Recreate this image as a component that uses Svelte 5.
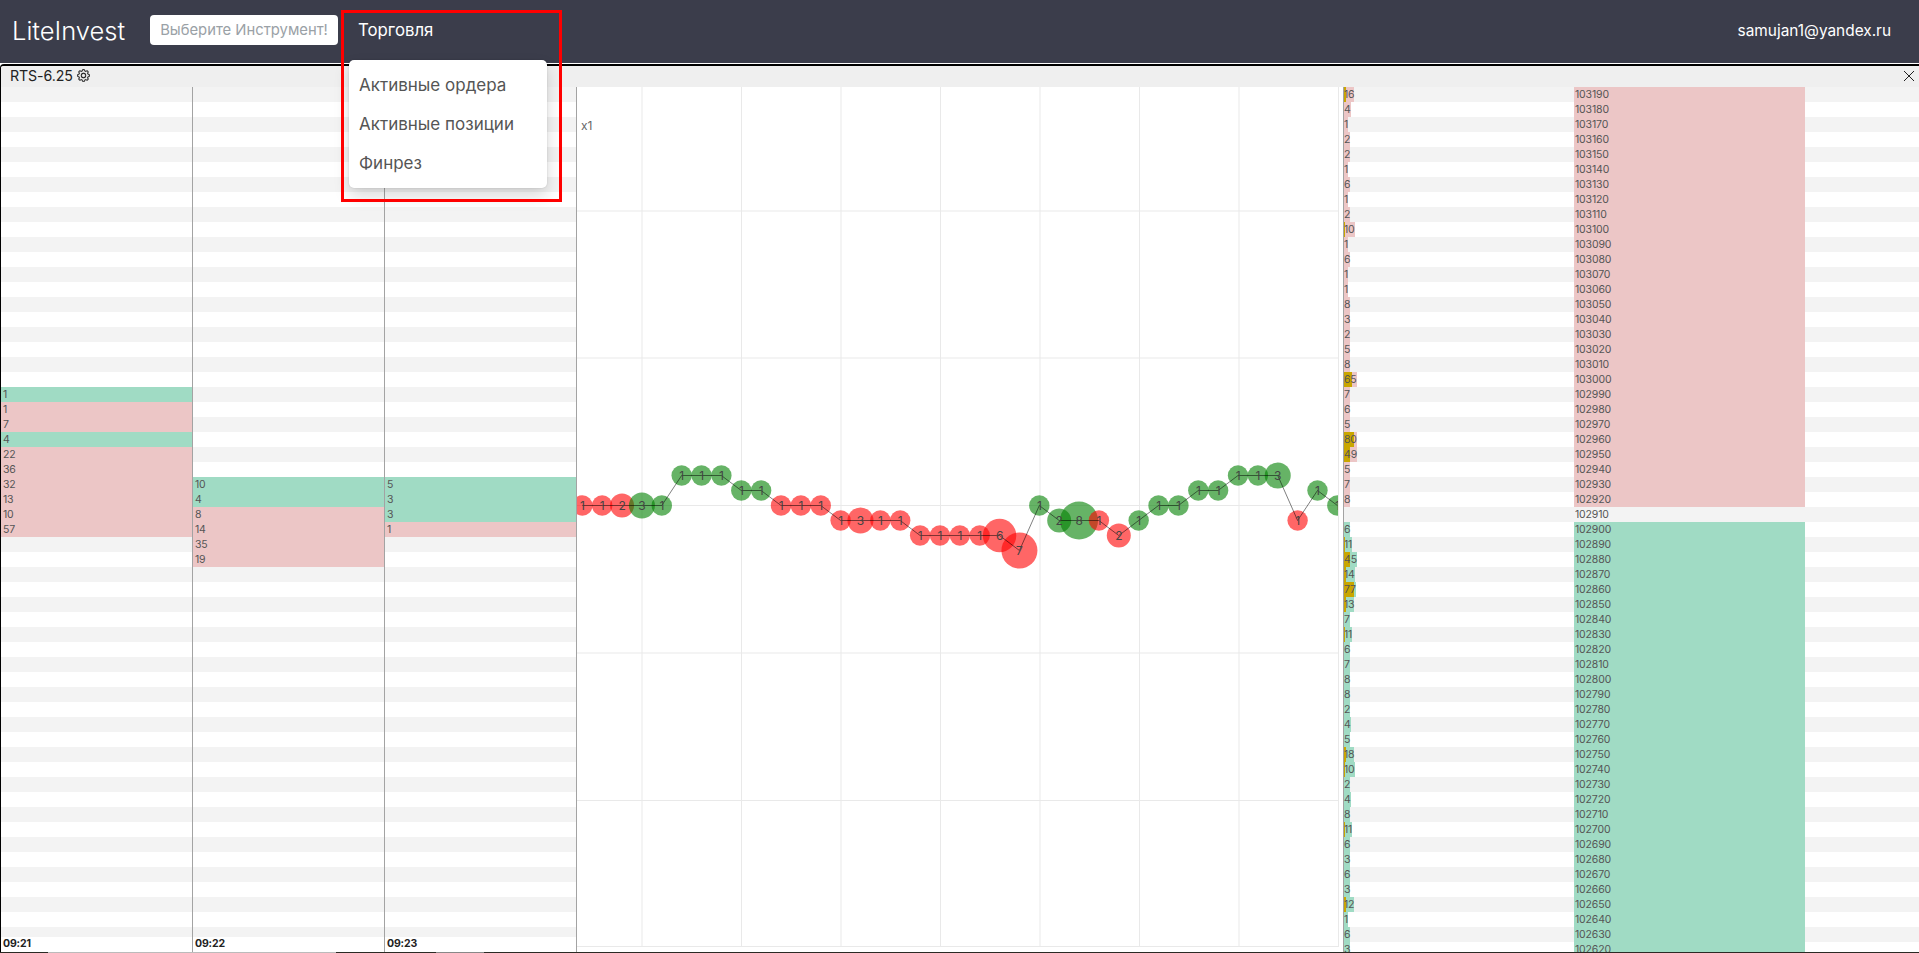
<script>
    const leftCols = [
        { time: "09:21", start: 20, cells: [[1, "g"], [1, "r"], [7, "r"], [4, "g"], [22, "r"], [36, "r"], [32, "r"], [13, "r"], [10, "r"], [57, "r"]] },
        { time: "09:22", start: 26, cells: [[10, "g"], [4, "g"], [8, "r"], [14, "r"], [35, "r"], [19, "r"]] },
        { time: "09:23", start: 26, cells: [[5, "g"], [3, "g"], [3, "g"], [1, "r"]] }
    ];

    function colRows(col) {
        const rows = [];
        for (let i = 0; i < 57; i++) {
            const cell = col.cells[i - col.start];
            rows.push(cell ? { value: cell[0], side: cell[1] } : { value: "", side: "" });
        }
        return rows;
    }

    const volumes = [16, 4, 1, 2, 2, 1, 6, 1, 2, 10, 1, 6, 1, 1, 8, 3, 2, 5, 8, 65, 7, 6, 5, 80, 49, 5, 7, 8, 0,
        6, 11, 45, 14, 77, 13, 7, 11, 6, 7, 8, 8, 2, 4, 5, 18, 10, 2, 4, 8, 11, 6, 3, 6, 3, 12, 1, 6, 3];

    const ladder = volumes.map((v, i) => ({
        volume: v,
        price: 103190 - i * 10,
        side: i < 28 ? "r" : i > 28 ? "g" : "",
        gold: v >= 10 ? Math.max(1, v * 0.125) : 0
    }));

    // trades: value, side, price level y
    const trades = [
        [1, "r", 505], [1, "r", 505], [2, "r", 505], [3, "g", 505], [1, "g", 505],
        [1, "g", 475], [1, "g", 475], [1, "g", 475], [1, "g", 490], [1, "g", 490],
        [1, "r", 505], [1, "r", 505], [1, "r", 505], [1, "r", 520], [3, "r", 520],
        [1, "r", 520], [1, "r", 520], [1, "r", 535], [1, "r", 535], [1, "r", 535],
        [1, "r", 535], [6, "r", 535], [7, "r", 550], [1, "g", 505], [2, "g", 520],
        [8, "g", 520], [1, "r", 520], [2, "r", 535], [1, "g", 520], [1, "g", 505],
        [1, "g", 505], [1, "g", 490], [1, "g", 490], [1, "g", 475], [1, "g", 475],
        [3, "g", 475], [1, "r", 520], [1, "g", 490], [1, "g", 505]
    ];
    const radius = { 1: 10.2, 2: 12, 3: 13, 6: 16.7, 7: 18, 8: 19 };

    const bubbles = trades.map((t, i) => ({
        value: t[0],
        side: t[1],
        x: 582.3 + i * 19.87,
        y: t[2] + 0.5,
        r: radius[t[0]]
    }));
    const linePoints = bubbles.map((b) => `${b.x},${b.y}`).join(" ");

    const gridX = [642, 741.5, 841, 940.5, 1040, 1139.5, 1239];
    const gridY = [211, 358, 505.5, 653, 800.5];
</script>

<div class="page">
    <header class="topbar">
        <span class="logo">LiteInvest</span>
        <button class="picker">Выберите Инструмент!</button>
        <span class="nav-link">Торговля</span>
        <span class="email">samujan1@yandex.ru</span>
    </header>

    <section class="panel">
        <div class="panel-title">
            <span>RTS-6.25</span>
            <svg class="gear" viewBox="0 0 16 16" fill="currentColor" stroke="currentColor" stroke-width="0.3">
                <path d="M8 4.754a3.246 3.246 0 1 0 0 6.492 3.246 3.246 0 0 0 0-6.492zM5.754 8a2.246 2.246 0 1 1 4.492 0 2.246 2.246 0 0 1-4.492 0z" />
                <path d="M9.796 1.343c-.527-1.79-3.065-1.79-3.592 0l-.094.319a.873.873 0 0 1-1.255.52l-.292-.16c-1.64-.892-3.433.902-2.54 2.541l.159.292a.873.873 0 0 1-.52 1.255l-.319.094c-1.79.527-1.79 3.065 0 3.592l.319.094a.873.873 0 0 1 .52 1.255l-.16.292c-.892 1.64.901 3.434 2.541 2.54l.292-.159a.873.873 0 0 1 1.255.52l.094.319c.527 1.79 3.065 1.79 3.592 0l.094-.319a.873.873 0 0 1 1.255-.52l.292.16c1.64.893 3.434-.902 2.54-2.541l-.159-.292a.873.873 0 0 1 .52-1.255l.319-.094c1.79-.527 1.79-3.065 0-3.592l-.319-.094a.873.873 0 0 1-.52-1.255l.16-.292c.893-1.64-.902-3.433-2.541-2.54l-.292.159a.873.873 0 0 1-1.255-.52l-.094-.319zm-2.633.283c.246-.835 1.428-.835 1.674 0l.094.319a1.873 1.873 0 0 0 2.693 1.115l.291-.16c.764-.415 1.6.42 1.184 1.185l-.159.292a1.873 1.873 0 0 0 1.116 2.692l.318.094c.835.246.835 1.428 0 1.674l-.319.094a1.873 1.873 0 0 0-1.115 2.693l.16.291c.415.764-.42 1.6-1.185 1.184l-.291-.159a1.873 1.873 0 0 0-2.693 1.116l-.094.318c-.246.835-1.428.835-1.674 0l-.094-.319a1.873 1.873 0 0 0-2.692-1.115l-.292.16c-.764.415-1.6-.42-1.184-1.185l.159-.291A1.873 1.873 0 0 0 1.945 8.93l-.319-.094c-.835-.246-.835-1.428 0-1.674l.319-.094A1.873 1.873 0 0 0 3.06 4.377l-.16-.292c-.415-.764.42-1.6 1.185-1.184l.292.159a1.873 1.873 0 0 0 2.692-1.115l.094-.319z" />
            </svg>
            <svg class="close" viewBox="0 0 10 10" fill="none" stroke="currentColor" stroke-width="1">
                <path d="M0 0 10 10M10 0 0 10" />
            </svg>
        </div>

        <div class="panel-body">
            {#each leftCols as col}
                <div class="col">
                    <div class="col-rows">
                        {#each colRows(col) as row, i}
                            <div class="row {row.side}" class:odd={i % 2 === 1}>{row.value}</div>
                        {/each}
                    </div>
                    <div class="col-time">{col.time}</div>
                </div>
            {/each}

            <div class="chart">
                <svg viewBox="577 87 766 866" width="766" height="866">
                    <defs>
                        <clipPath id="plot"><rect x="577" y="87" width="761" height="860" /></clipPath>
                    </defs>
                    {#each gridX as x}
                        <line class="grid" x1={x} x2={x} y1="87" y2="947" />
                    {/each}
                    {#each gridY as y}
                        <line class="grid" x1="577" x2="1338" y1={y} y2={y} />
                    {/each}
                    <line class="grid" x1="577" x2="1338.5" y1="946.5" y2="946.5" />
                    <line class="grid" x1="1338.5" x2="1338.5" y1="87" y2="947" />
                    <text class="zoom-label" x="581" y="130">x1</text>
                    <g clip-path="url(#plot)">
                        {#each bubbles as b}
                            <circle class={b.side} cx={b.x} cy={b.y} r={b.r} />
                        {/each}
                        <polyline class="path" points={linePoints} />
                        {#each bubbles as b}
                            <text class="bubble-label" x={b.x} y={b.y + 4}>{b.value}</text>
                        {/each}
                    </g>
                </svg>
            </div>

            <div class="ladder">
                {#each ladder as row, i}
                    <div class="ladder-row" class:odd={i % 2 === 1}>
                        <div class="vol-cell">
                            {#if row.volume}
                                <span class="vol {row.side}">
                                    {#if row.gold}<i class="gold" style="width:{row.gold}px"></i>{/if}
                                    <b>{row.volume}</b>
                                </span>
                            {/if}
                        </div>
                        <div class="price {row.side}">{row.price}</div>
                    </div>
                {/each}
            </div>
        </div>
    </section>

    <div class="bottom-edge"></div>

    <!-- open dropdown -->
    <div class="menu">
        <div class="menu-item">Активные ордера</div>
        <div class="menu-item">Активные позиции</div>
        <div class="menu-item">Финрез</div>
    </div>

    <!-- annotation frame from the screenshot -->
    <div class="marker"></div>
</div>

<style>
    :global(body) {
        margin: 0;
        background: #fff;
    }

    .page {
        position: relative;
        width: 1919px;
        height: 953px;
        overflow: hidden;
        font-family: Inter, "Noto Sans", sans-serif;
        color: #333;
    }

    .topbar {
        display: flex;
        align-items: center;
        height: 63px;
        padding: 0 28px 3px 12px;
        box-sizing: border-box;
        background: #3b3d4b;
        color: #fff;
    }

    .logo {
        width: 138px;
        font-size: 25.5px;
        font-weight: 300;
    }

    .picker {
        width: 188px;
        height: 30px;
        padding: 0;
        border: none;
        border-radius: 4px;
        background: #fff;
        color: #9aa1a6;
        font-family: inherit;
        font-size: 14.8px;
        white-space: nowrap;
    }

    .nav-link {
        margin-left: 20px;
        font-size: 16.8px;
    }

    .email {
        margin-left: auto;
        font-size: 15.4px;
    }

    .panel {
        height: 889px;
        margin-top: 1px;
        border-top: 2px solid #000;
        border-left: 1px solid #000;
        border-top-left-radius: 4px;
        overflow: hidden;
    }

    .panel-title {
        display: flex;
        align-items: center;
        height: 21px;
        padding: 0 5px 2px 9px;
        box-sizing: border-box;
        background: #efefef;
        color: #222;
        font-size: 14.2px;
        letter-spacing: -0.1px;
    }

    .gear {
        width: 13px;
        height: 13px;
        margin-left: 4px;
    }

    .close {
        width: 10px;
        height: 10px;
        margin-left: auto;
    }

    .panel-body {
        display: flex;
        height: 866px;
        font-size: 10.5px;
        letter-spacing: -0.15px;
    }

    .col {
        flex: 0 0 192px;
        box-sizing: border-box;
        border-right: 1px solid #a3a3a3;
    }

    .col-rows {
        height: 850px;
        overflow: hidden;
    }

    .row {
        height: 15px;
        padding-left: 2px;
        line-height: 15px;
        background: #f3f3f3;
        color: #555;
    }

    .row.odd {
        background: #fff;
    }

    .row.g,
    .row.g.odd {
        background: #a0dbc4;
    }

    .row.r,
    .row.r.odd {
        background: #ecc6c6;
    }

    .col-time {
        height: 15px;
        padding-left: 2px;
        line-height: 14px;
        font-weight: 700;
        color: #222;
    }

    .chart {
        flex: 0 0 766px;
        background: #fff;
    }

    .chart svg {
        display: block;
    }

    .grid {
        stroke: #e9e9e9;
        stroke-width: 1;
    }

    .zoom-label {
        font-size: 12px;
        fill: #666;
    }

    circle.r {
        fill: #ff0000;
        fill-opacity: 0.6;
    }

    circle.g {
        fill: #008000;
        fill-opacity: 0.6;
    }

    .path {
        fill: none;
        stroke: #000;
        stroke-opacity: 0.5;
        stroke-width: 1;
    }

    .bubble-label {
        font-size: 12px;
        fill: #444;
        text-anchor: middle;
    }

    .ladder {
        flex: 1;
        border-left: 1px solid #a3a3a3;
        overflow: hidden;
    }

    .ladder-row {
        display: flex;
        height: 15px;
        line-height: 15px;
        background: #f3f3f3;
        color: #555;
    }

    .ladder-row.odd {
        background: #fff;
    }

    .vol-cell {
        flex: 0 0 230px;
    }

    .vol {
        position: relative;
        display: inline-block;
        height: 15px;
        vertical-align: top;
    }

    .vol b {
        position: relative;
        font-weight: 400;
    }

    .gold {
        position: absolute;
        top: 0;
        left: 0;
        height: 15px;
        background: #c9a600;
    }

    .vol.r,
    .price.r {
        background: #ecc6c6;
    }

    .vol.g,
    .price.g {
        background: #a0dbc4;
    }

    .price {
        flex: 0 0 231px;
        box-sizing: border-box;
        padding-left: 1px;
    }

    .bottom-edge {
        position: absolute;
        left: 0;
        right: 0;
        bottom: 0;
        height: 1px;
        background: linear-gradient(to right, #2b2a24 48px, #bbb 48px, #bbb 336px, #2b2a24 336px, #2b2a24 436px, #888 436px, #888 484px, #2b2a24 484px);
    }

    .menu {
        position: absolute;
        left: 349px;
        top: 60px;
        box-sizing: border-box;
        width: 198px;
        height: 128px;
        padding-top: 6px;
        border-radius: 5px;
        background: #fff;
        box-shadow: 0 8px 16px rgba(0, 0, 0, 0.15), 0 0 2px rgba(0, 0, 0, 0.15);
    }

    .menu-item {
        height: 39px;
        padding-left: 10px;
        line-height: 39px;
        font-size: 17px;
        color: #555;
    }

    .marker {
        position: absolute;
        left: 341px;
        top: 10px;
        box-sizing: border-box;
        width: 221px;
        height: 192px;
        border: 3px solid #f00;
        pointer-events: none;
    }
</style>
